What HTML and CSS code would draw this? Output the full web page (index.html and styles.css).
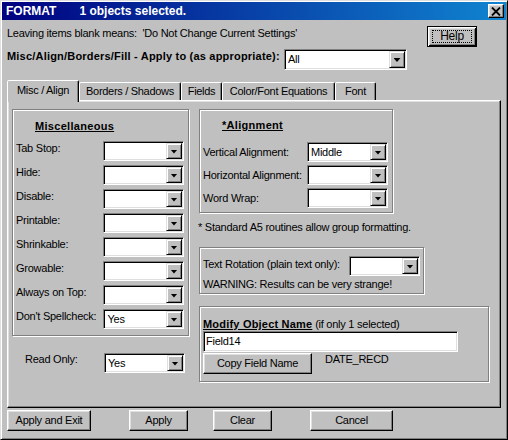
FILE: index.html
```html
<!DOCTYPE html>
<html>
<head>
<meta charset="utf-8">
<link rel="stylesheet" href="styles.css">
</head>
<body>
<div class="window">
  <div class="titlebar">
    <span class="title-main">FORMAT</span><span class="title-sub">1 objects selected.</span>
    <span class="close">
      <svg width="10" height="9" viewBox="0 0 10 9"><path d="M1 0.5 L9 8.5 M9 0.5 L1 8.5" stroke="#000" stroke-width="1.8" fill="none"/></svg>
    </span>
  </div>

  <div class="row1">
    <span class="hint">Leaving items blank means:&nbsp; 'Do Not Change Current Settings'</span>
    <button class="btn btn-default help"><span class="focus">Help</span></button>
  </div>

  <div class="row2">
    <span class="apply-label">Misc/Align/Borders/Fill - Apply to (as appropriate):</span>
    <div class="combo combo-all"><span class="val">All</span><span class="drop"><i class="arrow"></i></span></div>
  </div>

  <div class="tabs">
    <div class="tab active t1">Misc / Align</div>
    <div class="tab t2">Borders / Shadows</div>
    <div class="tab t3">Fields</div>
    <div class="tab t4">Color/Font Equations</div>
    <div class="tab t5">Font</div>
  </div>

  <div class="panel">
    <div class="col-left">
      <div class="group misc">
        <div class="gtitle">Miscellaneous</div>
        <div class="frow"><span class="flabel">Tab Stop:</span><div class="combo cw80"><span class="val"></span><span class="drop"><i class="arrow"></i></span></div></div>
        <div class="frow"><span class="flabel">Hide:</span><div class="combo cw80"><span class="val"></span><span class="drop"><i class="arrow"></i></span></div></div>
        <div class="frow"><span class="flabel">Disable:</span><div class="combo cw80"><span class="val"></span><span class="drop"><i class="arrow"></i></span></div></div>
        <div class="frow"><span class="flabel">Printable:</span><div class="combo cw80"><span class="val"></span><span class="drop"><i class="arrow"></i></span></div></div>
        <div class="frow"><span class="flabel">Shrinkable:</span><div class="combo cw80"><span class="val"></span><span class="drop"><i class="arrow"></i></span></div></div>
        <div class="frow"><span class="flabel">Growable:</span><div class="combo cw80"><span class="val"></span><span class="drop"><i class="arrow"></i></span></div></div>
        <div class="frow"><span class="flabel">Always on Top:</span><div class="combo cw80"><span class="val"></span><span class="drop"><i class="arrow"></i></span></div></div>
        <div class="frow"><span class="flabel">Don't Spellcheck:</span><div class="combo cw80"><span class="val">Yes</span><span class="drop"><i class="arrow"></i></span></div></div>
      </div>
      <div class="readonly">
        <span class="rlabel">Read Only:</span>
        <div class="combo cw80"><span class="val">Yes</span><span class="drop"><i class="arrow"></i></span></div>
      </div>
    </div>

    <div class="col-right">
      <div class="group align">
        <div class="gtitle">*Alignment</div>
        <div class="arow"><span class="alabel">Vertical Alignment:</span><div class="combo cw80"><span class="val">Middle</span><span class="drop"><i class="arrow"></i></span></div></div>
        <div class="arow"><span class="alabel">Horizontal Alignment:</span><div class="combo cw80"><span class="val"></span><span class="drop"><i class="arrow"></i></span></div></div>
        <div class="arow"><span class="alabel">Word Wrap:</span><div class="combo cw80"><span class="val"></span><span class="drop"><i class="arrow"></i></span></div></div>
      </div>
      <div class="note">* Standard A5 routines allow group formatting.</div>

      <div class="group rotation">
        <div class="rotrow"><span class="rotlabel">Text Rotation (plain text only):</span><div class="combo cw70"><span class="val"></span><span class="drop"><i class="arrow"></i></span></div></div>
        <div class="warn">WARNING: Results can be very strange!</div>
      </div>

      <div class="group modify">
        <div class="mtitle"><span class="mbold">Modify Object Name</span> (if only 1 selected)</div>
        <div class="textbox">Field14</div>
        <div class="copyrow">
          <button class="btn copy">Copy Field Name</button>
          <span class="fieldname">DATE_RECD</span>
        </div>
      </div>
    </div>
  </div>

  <div class="footer">
    <button class="btn b-exit">Apply and Exit</button>
    <button class="btn b-apply">Apply</button>
    <button class="btn b-clear">Clear</button>
    <button class="btn b-cancel">Cancel</button>
  </div>
</div>
</body>
</html>
```

FILE: styles.css
```css
* { box-sizing: border-box; }

html, body {
  margin: 0;
  padding: 0;
  background: #c0c0c0;
}

body {
  font-family: "Liberation Sans", Arial, sans-serif;
  font-size: 11px;
  letter-spacing: -0.25px;
  color: #000;
}

/* base button */
.btn {
  font-family: "Liberation Sans", Arial, sans-serif;
  font-size: 11px;
  letter-spacing: -0.25px;
  color: #000;
  background: #c0c0c0;
  border: 1px solid;
  border-color: #fff #000 #000 #fff;
  box-shadow: inset -1px -1px #808080, inset 1px 1px #dfdfdf;
  height: 21px;
  padding: 0;
  margin: 0;
  line-height: 17px;
  text-align: center;
}

.window {
  width: 508px;
  height: 440px;
  background: #c0c0c0;
  border: 1px solid;
  border-color: #dfdfdf #000 #000 #dfdfdf;
  box-shadow: inset 1px 1px #fff, inset -1px -1px #808080;
  padding: 1px;
}

/* title bar */
.titlebar {
  height: 18px;
  background: linear-gradient(to right, #000080, #1084d0);
  display: flex;
  align-items: center;
  padding-left: 4px;
  color: #fff;
  font-weight: bold;
  font-size: 12px;
  letter-spacing: 0;
  line-height: 18px;
}

.title-sub { margin-left: 23px; }

.close {
  margin-left: auto;
  margin-right: 2px;
  width: 16px;
  height: 14px;
  background: #c0c0c0;
  border: 1px solid;
  border-color: #fff #000 #000 #fff;
  box-shadow: inset -1px -1px #808080, inset 1px 1px #dfdfdf;
  display: flex;
  align-items: center;
  justify-content: center;
  padding-right: 1px;
}

.close svg { display: block; }

/* top rows */
.row1 {
  display: flex;
  align-items: flex-start;
  height: 21px;
  margin-top: 6px;
  padding-left: 5px;
}

.hint {
  margin-top: 1px;
  line-height: 13px;
  white-space: pre;
}

.btn.help {
  margin-left: auto;
  margin-right: 29px;
  width: 50px;
  height: 21px;
}

.btn.btn-default {
  border: 1px solid #000;
  box-shadow: inset 1px 1px #fff, inset -1px -1px #000, inset 2px 2px #dfdfdf, inset -2px -2px #808080;
  padding: 3px 4px;
}

.focus {
  display: block;
  border: 1px dotted #000;
  height: 13px;
  line-height: 11px;
  font-size: 12px;
}

.row2 {
  display: flex;
  align-items: flex-start;
  height: 21px;
  margin-top: 2px;
  padding-left: 5px;
}

.apply-label {
  font-weight: bold;
  letter-spacing: 0.2px;
  line-height: 13px;
  margin-top: 1px;
  width: 277px;
  white-space: nowrap;
}

.combo-all { width: 123px; height: 21px; }

/* combo box */
.combo {
  display: flex;
  height: 20px;
  background: #fff;
  border: 1px solid;
  border-color: #808080 #fff #fff #808080;
  box-shadow: inset 1px 1px #000, inset -1px -1px #dfdfdf;
  padding: 1px;
}

.combo.combo-all { height: 21px; }

.cw80 { width: 81px; }
.cw70 { width: 71px; }

.val {
  flex: 1;
  padding-left: 2px;
  line-height: 16px;
  white-space: nowrap;
  overflow: hidden;
}

.combo-all .val { line-height: 17px; }

.drop {
  width: 16px;
  flex: none;
  background: #c0c0c0;
  border: 1px solid;
  border-color: #dfdfdf #000 #000 #dfdfdf;
  box-shadow: inset 1px 1px #fff, inset -1px -1px #808080;
  display: flex;
  align-items: center;
  justify-content: center;
}

.arrow {
  display: block;
  width: 7px;
  height: 4px;
  background: #000;
  clip-path: polygon(0 0, 100% 0, 50% 100%);
  margin-top: 1px;
}

/* tabs */
.tabs {
  display: flex;
  align-items: flex-end;
  height: 20px;
  margin: 10px 0 0 5px;
}

.tab {
  height: 18px;
  border: 1px solid;
  border-bottom: none;
  border-color: #fff #000 transparent #fff;
  box-shadow: inset -1px 0 #808080;
  border-radius: 2px 2px 0 0;
  text-align: center;
  line-height: 16px;
  letter-spacing: -0.3px;
  white-space: nowrap;
  background: #c0c0c0;
}

.tab.active {
  height: 22px;
  margin-bottom: -2px;
  line-height: 18px;
  z-index: 2;
}

.t1 { width: 72px; }
.t2 { width: 102px; }
.t3 { width: 41px; }
.t4 { width: 113px; }
.t5 { width: 41px; }

/* panel */
.panel {
  margin-left: 5px;
  width: 494px;
  height: 308px;
  border: 1px solid;
  border-color: #fff #000 #000 #fff;
  box-shadow: inset -1px -1px #808080, inset 1px 1px #dfdfdf;
  display: flex;
  padding: 8px 0 0 4px;
  gap: 10px;
}

.group {
  border: 1px solid #808080;
  box-shadow: inset 1px 1px #fff, 1px 1px #fff;
}

.gtitle {
  font-weight: bold;
  letter-spacing: 0.3px;
  text-decoration: underline;
  line-height: 13px;
  margin-left: 19px;
}

.col-left { width: 177px; }

.misc {
  width: 177px;
  height: 227px;
  padding: 10px 4px 6px 3px;
}

.misc .gtitle { margin-bottom: 8px; }

.frow {
  display: flex;
  height: 20px;
}

.frow + .frow { margin-top: 4px; }

.flabel {
  width: 88px;
  line-height: 13px;
  padding-top: 1px;
  white-space: nowrap;
}

.readonly {
  display: flex;
  margin-top: 17px;
  padding-left: 13px;
}

.rlabel {
  width: 79px;
  line-height: 13px;
}

.col-right { width: 290px; }

.align {
  width: 194px;
  height: 104px;
  padding: 9px 4px 4px 3px;
}

.align .gtitle { margin-bottom: 10px; }

.arow {
  display: flex;
  align-items: center;
  height: 20px;
}

.arow + .arow { margin-top: 3px; }

.alabel {
  width: 104px;
  line-height: 13px;
  white-space: nowrap;
}

.note {
  margin-top: 8px;
  line-height: 13px;
  margin-left: -1px;
}

.rotation {
  margin-top: 13px;
  width: 225px;
  height: 47px;
  padding: 8px 3px 2px 3px;
}

.rotrow {
  display: flex;
  height: 20px;
}

.rotlabel {
  width: 146px;
  line-height: 13px;
  padding-top: 2px;
  white-space: nowrap;
}

.warn {
  margin-top: 2px;
  line-height: 13px;
  white-space: nowrap;
}

.modify {
  margin-top: 12px;
  width: 290px;
  height: 76px;
  padding: 11px 3px 8px 3px;
}

.mtitle {
  line-height: 13px;
  white-space: nowrap;
}

.mbold {
  font-weight: bold;
  letter-spacing: 0.2px;
  text-decoration: underline;
}

.textbox {
  width: 255px;
  height: 21px;
  background: #fff;
  border: 1px solid;
  border-color: #808080 #fff #fff #808080;
  box-shadow: inset 1px 1px #000, inset -1px -1px #dfdfdf;
  padding: 1px 2px;
  line-height: 17px;
}

.copyrow {
  display: flex;
  align-items: flex-start;
  margin-top: 1px;
}

.btn.copy {
  width: 109px;
  height: 21px;
}

.fieldname {
  margin-left: 13px;
  line-height: 13px;
}

/* footer */
.footer {
  display: flex;
  margin-top: 2px;
  padding-left: 5px;
}

.btn.b-exit { width: 84px; }
.btn.b-apply { width: 59px; margin-left: 38px; }
.btn.b-clear { width: 59px; margin-left: 25px; }
.btn.b-cancel { width: 83px; margin-left: 38px; }
```
